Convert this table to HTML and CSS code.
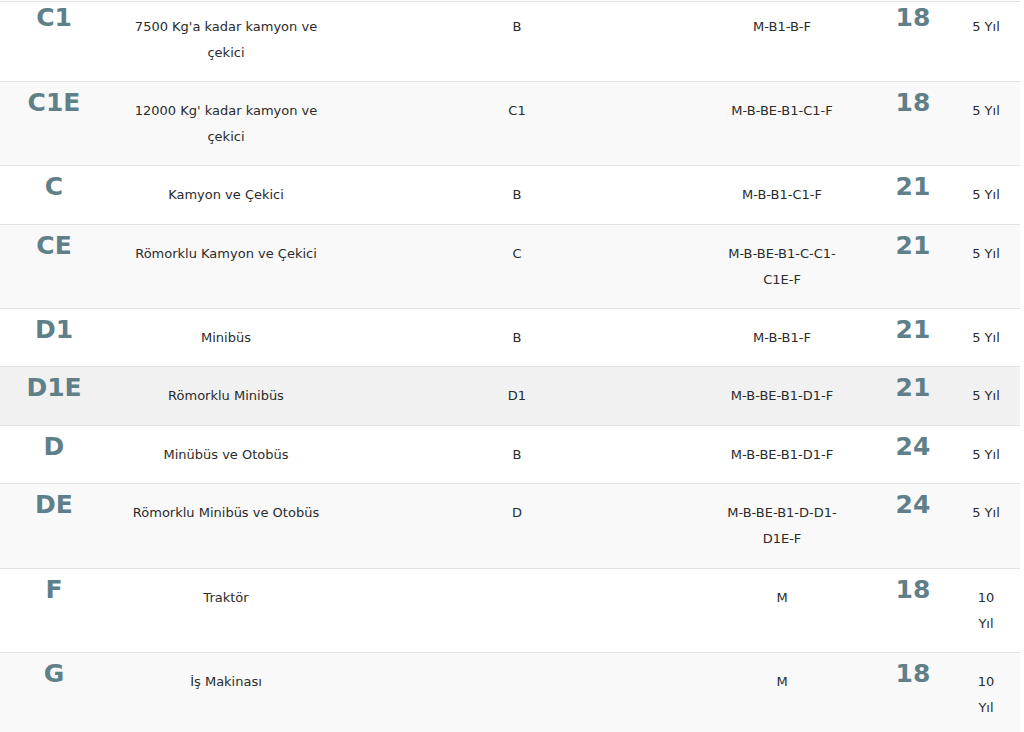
FILE: index.html
```html
<!DOCTYPE html>
<html lang="tr">
<head>
<meta charset="utf-8">
<title>Ehliyet Sınıfları</title>
<link rel="stylesheet" href="styles.css">
</head>
<body>
<table class="classes">
  <colgroup>
    <col class="c-class"><col class="c-desc"><col class="c-req"><col class="c-incl"><col class="c-age"><col class="c-exp">
  </colgroup>
  <tbody>
    <tr class="first"><td class="code">C1</td><td>7500 Kg'a kadar kamyon ve çekici</td><td>B</td><td class="incl">M-B1-B-F</td><td class="code">18</td><td>5 Yıl</td></tr>
    <tr class="alt"><td class="code">C1E</td><td>12000 Kg' kadar kamyon ve çekici</td><td>C1</td><td class="incl">M-B-BE-B1-C1-F</td><td class="code">18</td><td>5 Yıl</td></tr>
    <tr><td class="code">C</td><td>Kamyon ve Çekici</td><td>B</td><td class="incl">M-B-B1-C1-F</td><td class="code">21</td><td>5 Yıl</td></tr>
    <tr class="alt"><td class="code">CE</td><td>Römorklu Kamyon ve Çekici</td><td>C</td><td class="incl">M-B-BE-B1-C-C1-C1E-F</td><td class="code">21</td><td>5 Yıl</td></tr>
    <tr><td class="code">D1</td><td>Minibüs</td><td>B</td><td class="incl">M-B-B1-F</td><td class="code">21</td><td>5 Yıl</td></tr>
    <tr class="hover"><td class="code">D1E</td><td>Römorklu Minibüs</td><td>D1</td><td class="incl">M-B-BE-B1-D1-F</td><td class="code">21</td><td>5 Yıl</td></tr>
    <tr><td class="code">D</td><td>Minübüs ve Otobüs</td><td>B</td><td class="incl">M-B-BE-B1-D1-F</td><td class="code">24</td><td>5 Yıl</td></tr>
    <tr class="alt"><td class="code">DE</td><td>Römorklu Minibüs ve Otobüs</td><td>D</td><td class="incl">M-B-BE-B1-D-D1-D1E-F</td><td class="code">24</td><td>5 Yıl</td></tr>
    <tr><td class="code">F</td><td>Traktör</td><td></td><td class="incl">M</td><td class="code">18</td><td>10 Yıl</td></tr>
    <tr class="alt"><td class="code">G</td><td>İş Makinası</td><td></td><td class="incl">M</td><td class="code">18</td><td>10 Yıl</td></tr>
  </tbody>
</table>
</body>
</html>
```
FILE: styles.css
```css
html, body {
  margin: 0;
  padding: 0;
  background: #fff;
}
body {
  font-family: "DejaVu Sans", "Liberation Sans", sans-serif;
  color: #2b2b2b;
  overflow: hidden;
}
.classes {
  width: 1020px;
  margin-top: 1px;
  border-collapse: collapse;
  table-layout: fixed;
}
.c-class { width: 108px; }
.c-desc { width: 236px; }
.c-req { width: 346px; }
.c-incl { width: 184px; }
.c-age { width: 78px; }
.c-exp { width: 68px; }
.classes td {
  border-top: 1px solid #e2e2e2;
  padding: 16px 20px 15.375px;
  font-size: 13px;
  line-height: 26px;
  text-align: center;
  vertical-align: top;
}
.classes td.incl {
  padding-left: 28px;
  padding-right: 28px;
}
.classes td.code {
  padding: 6px 0 0;
  font-size: 25px;
  line-height: 30px;
  font-weight: bold;
  color: #5f7f89;
}
.classes tr.first td { padding-top: 11.5px; }
.classes tr.first td.code { padding-top: 1px; }
.classes tr.alt td { background: #f9f9f9; }
.classes tr.hover td { background: #f1f1f1; }
```
